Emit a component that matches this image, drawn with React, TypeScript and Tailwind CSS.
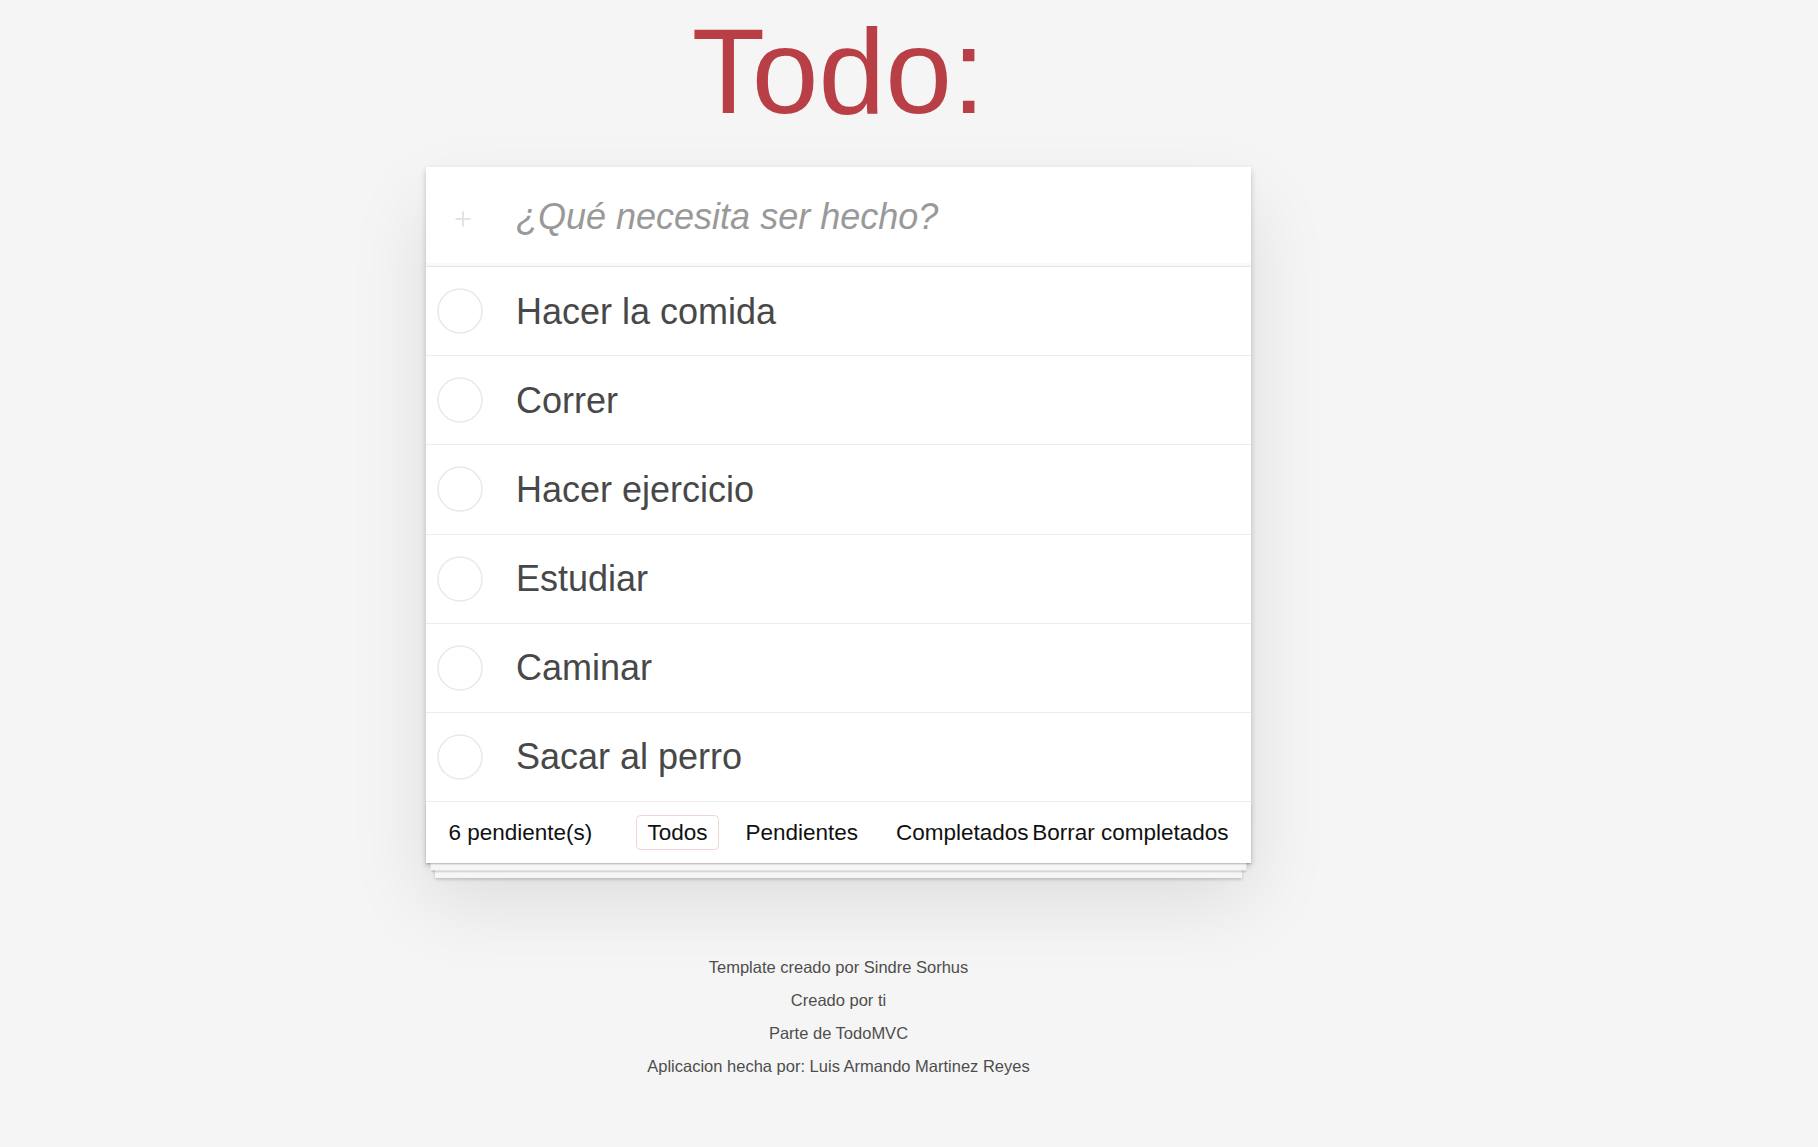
import { useState } from "react";

const initialTodos = [
  "Hacer la comida",
  "Correr",
  "Hacer ejercicio",
  "Estudiar",
  "Caminar",
  "Sacar al perro",
];

const filters = ["Todos", "Pendientes", "Completados"];

export default function App() {
  const [todos] = useState(initialTodos);
  const [filter, setFilter] = useState("Todos");

  return (
    <div className="min-h-screen bg-[#f5f5f5] font-['Liberation_Sans',Arial,sans-serif] text-[#111111]">
      <div className="w-[1677px]">
        <div className="mx-auto w-[825px] pt-[11px]">
          {/* Title */}
          <h1 className="text-center text-[120px] leading-none font-normal text-[#b83f45]">
            Todo:
          </h1>

          {/* App card */}
          <section className="mt-[36px] bg-white shadow-[0_3px_6px_0_rgba(0,0,0,0.2),0_37px_75px_0_rgba(0,0,0,0.1)]">
            <header className="flex h-[99px] items-center shadow-[inset_0_-3px_1.5px_rgba(0,0,0,0.03)]">
              <div className="flex w-[90px] items-center pt-[4px] pl-[29px]">
                <svg width="16" height="16" viewBox="0 0 16 16">
                  <path d="M8 0.5V15.5M0.5 8H15.5" stroke="#e4e4e4" strokeWidth="2" />
                </svg>
              </div>
              <input
                className="h-full flex-1 bg-transparent pr-[24px] text-[36px] leading-[1.4] text-[#4d4d4d] outline-none placeholder:italic placeholder:text-[#999999]"
                placeholder="¿Qué necesita ser hecho?"
              />
            </header>

            <ul className="border-t border-[#e6e6e6]">
              {todos.map((t) => (
                <li key={t} className="flex items-center border-b border-[#ededed]">
                  <div className="flex w-[90px] items-center pl-[11px]">
                    <svg width="46" height="46" viewBox="0 0 46 46">
                      <circle cx="23" cy="23" r="22" fill="none" stroke="#e9e9e9" strokeWidth="1.5" />
                    </svg>
                  </div>
                  <label className="flex-1 py-[22.5px] pr-[22px] text-[36px] leading-[1.2] text-[#484848]">
                    {t}
                  </label>
                </li>
              ))}
            </ul>

            <footer className="grid h-[61px] items-center px-[22.5px] text-[22.5px] leading-[30px] shadow-[0_1.5px_1.5px_rgba(0,0,0,0.2),0_12px_0_-4.5px_#f6f6f6,0_13.5px_1.5px_-4.5px_rgba(0,0,0,0.2),0_24px_0_-9px_#f6f6f6,0_25.5px_3px_-9px_rgba(0,0,0,0.2)]">
              <div className="col-start-1 row-start-1 flex items-center justify-between">
                <span>{todos.length} pendiente(s)</span>
                <button className="cursor-pointer">Borrar completados</button>
              </div>
              <ul className="col-start-1 row-start-1 flex items-center justify-center gap-[15px] pr-[1px]">
                {filters.map((f) => (
                  <li key={f}>
                    <a
                      href="#"
                      onClick={(e) => {
                        e.preventDefault();
                        setFilter(f);
                      }}
                      className={`block rounded-[4.5px] border px-[10.5px] py-[1.5px] ${
                        filter === f ? "border-[#efd5d5]" : "border-transparent"
                      }`}
                    >
                      {f}
                    </a>
                  </li>
                ))}
              </ul>
            </footer>
          </section>

          {/* Info */}
          <footer className="mt-[96px] flex flex-col items-center gap-[16.5px] text-[16.5px] leading-none text-[#4d4d4d] [text-shadow:0_1px_0_rgba(255,255,255,0.5)]">
            <p>Template creado por Sindre Sorhus</p>
            <p>Creado por ti</p>
            <p>Parte de TodoMVC</p>
            <p>Aplicacion hecha por: Luis Armando Martinez Reyes</p>
          </footer>
        </div>
      </div>
    </div>
  );
}
